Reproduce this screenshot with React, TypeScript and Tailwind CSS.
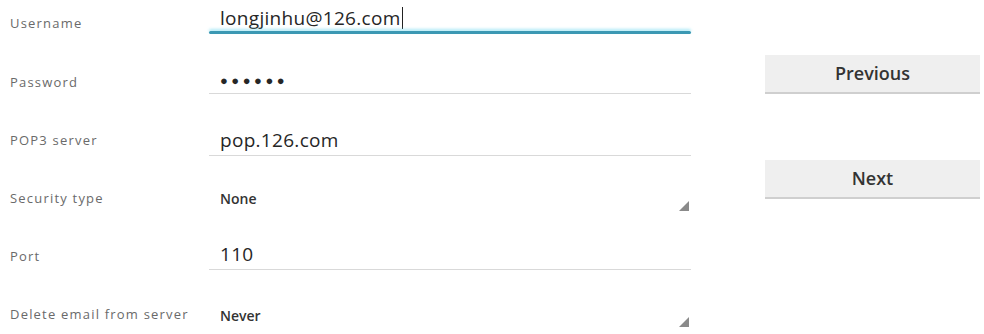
import { ReactNode } from "react";

const font = { fontFamily: '"Open Sans", "Noto Sans", sans-serif' };

function Row({ label, children }: { label: string; children: ReactNode }) {
  return (
    <div className="flex h-[58.2px] items-center">
      <div className="w-[209px] shrink-0 pl-[10px] text-[13px] tracking-[1.2px] text-[#6a6a6a]">{label}</div>
      <div className="flex flex-1 items-center">{children}</div>
    </div>
  );
}

function TextField({ children, focused, className }: { children: ReactNode; focused?: boolean; className?: string }) {
  return (
    <div className={`relative flex h-[32px] w-[482px] items-center pl-[11px] ${className ?? ""}`}>
      <div className="text-[19px] tracking-[0.3px] text-[#262626]">{children}</div>
      {focused ? (
        <div className="absolute bottom-0 left-0 right-0 h-[3px] rounded-sm bg-[#3b98b3] shadow-[0_-2px_3px_rgba(120,220,240,0.6)]" />
      ) : (
        <div className="absolute bottom-0 left-0 right-0 h-px bg-[#d9d9d9]" />
      )}
    </div>
  );
}

function Spinner({ value }: { value: string }) {
  return (
    <div className="relative flex h-[32px] w-[482px] items-center pl-[11px]">
      <div className="text-[14px] font-semibold text-[#333]">{value}</div>
      <svg className="absolute right-[2px] top-[18px]" width="10" height="10" viewBox="0 0 10 10">
        <path d="M10 0 L10 10 L0 10 Z" fill="#8a8a8a" />
      </svg>
    </div>
  );
}

function Btn({ children }: { children: ReactNode }) {
  return (
    <div className="flex h-[39px] w-[215px] items-center justify-center border-b-2 border-[#cfcfcf] bg-[#efefef] text-[18px] font-semibold text-[#333]">
      {children}
    </div>
  );
}

export default function App() {
  return (
    <div className="flex h-[334px] w-[984px] overflow-hidden bg-white" style={font}>
      <div className="mt-[-5px] w-[710px]">
        <Row label="Username">
          <TextField focused className="mb-[12px]">
            <span>longjinhu@126.com</span>
            <span className="ml-px inline-block h-[22px] w-[1.5px] translate-y-[4px] bg-[#222]" />
          </TextField>
        </Row>
        <Row label="Password">
          <TextField className="mb-[8px]">
            <span className="text-[13px] tracking-[3.5px]">●●●●●●</span>
          </TextField>
        </Row>
        <Row label="POP3 server">
          <TextField>pop.126.com</TextField>
        </Row>
        <Row label="Security type">
          <Spinner value="None" />
        </Row>
        <Row label="Port">
          <TextField className="mb-[6px]">110</TextField>
        </Row>
        <Row label="Delete email from server">
          <Spinner value="Never" />
        </Row>
      </div>
      <div className="ml-[55px] flex flex-col pt-[55px]">
        <Btn>Previous</Btn>
        <div className="h-[66px]" />
        <Btn>Next</Btn>
      </div>
    </div>
  );
}
